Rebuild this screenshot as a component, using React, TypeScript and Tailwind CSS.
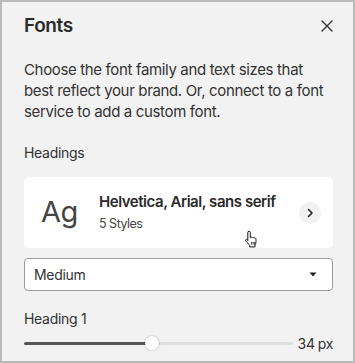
import React from "react";

export default function App() {
  const pct = (152 - 24) / (293 - 24);
  return (
    <div
      className="relative w-[355px] h-[363px] bg-[#f2f2f2] border-2 border-[#bababa] pl-[22px] pr-[20px] pt-[12px] flex flex-col text-[#2e2e2e]"
      style={{ fontFamily: "Inter, 'Noto Sans', sans-serif" }}
    >
      <div className="flex items-center justify-between h-[24px]">
        <h1 className="text-[19px] leading-[24px] font-semibold tracking-[-0.4px] text-[#2a2a2a]">Fonts</h1>
        <svg width="12" height="12" viewBox="0 0 12 12">
          <path d="M1 1L11 11M11 1L1 11" stroke="#333" strokeWidth="1.4" strokeLinecap="round" />
        </svg>
      </div>
      <p className="mt-[21px] text-[15px] leading-[21px] tracking-[-0.35px] text-[#333]">
        Choose the font family and text sizes that best reflect your brand. Or, connect to a font service to add a custom font.
      </p>
      <div className="mt-[21px] text-[14px] leading-[20px] tracking-[-0.3px] text-[#333]">Headings</div>
      <div className="mt-[14px] h-[71px] bg-white rounded-[5px] flex items-center pl-[17px] pr-[12px]">
        <span className="text-[29px] leading-none text-[#444] tracking-[-0.6px] w-[58px] pb-[2px]">Ag</span>
        <div className="flex-1 flex flex-col">
          <span className="text-[15px] leading-[20px] font-semibold tracking-[-0.45px] text-[#2a2a2a]">Helvetica, Arial, sans serif</span>
          <span className="text-[12.5px] leading-[18px] tracking-[-0.5px] text-[#444] mt-[3px]">5 Styles</span>
        </div>
        <div className="w-[22px] h-[22px] rounded-full bg-[#f2f2f2] flex items-center justify-center">
          <svg width="8" height="10" viewBox="0 0 8 10">
            <path d="M2.5 1.5L6 5L2.5 8.5" fill="none" stroke="#222" strokeWidth="1.6" strokeLinecap="round" strokeLinejoin="round" />
          </svg>
        </div>
      </div>
      <div className="mt-[10px] h-[33px] bg-white border border-[#9a9a9a] rounded-[4px] flex items-center justify-between pl-[9px] pr-[15px]">
        <span className="text-[14px] tracking-[-0.3px] text-[#333]">Medium</span>
        <svg width="8" height="5" viewBox="0 0 8 5">
          <path d="M0.5 0.5H7.5L4 4.5Z" fill="#222" />
        </svg>
      </div>
      <div className="mt-[18px] text-[14px] leading-[20px] tracking-[-0.3px] text-[#333]">Heading 1</div>
      <div className="mt-[4px] h-[20px] flex items-center">
        <div className="relative w-[269px] h-[3px] rounded-full bg-[#dedede]">
          <div className="absolute left-0 top-0 h-[3px] rounded-full bg-[#555]" style={{ width: `${pct * 100}%` }} />
          <div
            className="absolute top-1/2 w-[14px] h-[14px] -translate-x-1/2 -translate-y-1/2 rounded-full bg-white shadow-[0_0_2px_rgba(0,0,0,0.35)]"
            style={{ left: `${pct * 100}%` }}
          />
        </div>
        <span className="ml-auto text-[14px] tracking-[-0.3px] text-[#333]">
          34<span className="ml-[3px]">px</span>
        </span>
      </div>
      <svg className="absolute left-[242px] top-[228px]" width="16" height="18" viewBox="0 0 16 18">
        <path
          d="M5 1.2c.8 0 1.3.6 1.3 1.3v5.3l.1-.1c.3-.6 1.6-.6 1.9.1.4-.5 1.5-.5 1.8.2.5-.4 1.6-.2 1.8.6.1.4.1 1.6.1 2.8 0 1.6-.4 2.6-1 3.5v2H5.6v-1.6C4.5 14.2 2.3 11.6 1.8 10.7c-.4-.7.1-1.4.9-1.2.5.1 1 .6 1.1 1V2.5c0-.7.5-1.3 1.2-1.3z"
          fill="white"
          stroke="#111"
          strokeWidth="1"
          strokeLinejoin="round"
        />
        <path d="M7.6 12v2.6M9.1 12v2.6M10.6 12v2.6" stroke="#111" strokeWidth="0.8" />
      </svg>
    </div>
  );
}
